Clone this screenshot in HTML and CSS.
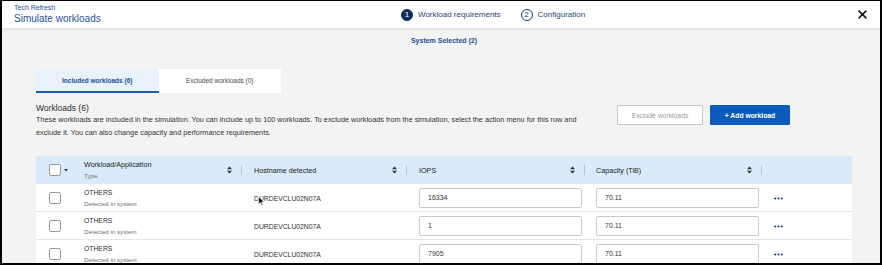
FILE: index.html
```html
<!DOCTYPE html>
<html lang="en">
<head>
    <meta charset="UTF-8">
    <meta name="viewport" content="width=device-width, initial-scale=1.0">
    <title>Simulate workloads</title>
    <link rel="stylesheet" href="styles.css">
</head>
<body>
    <div class="frame">
        <header class="topbar">
            <div class="title-block">
                <div class="crumb">Tech Refresh</div>
                <div class="title">Simulate workloads</div>
            </div>
            <ol class="steps">
                <li class="step active"><span class="step-num">1</span>Workload requirements</li>
                <li class="step"><span class="step-num">2</span>Configuration</li>
            </ol>
            <button class="close-button" aria-label="Close">
                <svg width="9" height="9" viewBox="0 0 9 9"><path d="M0.6 0.6 L8.4 8.4 M8.4 0.6 L0.6 8.4" stroke="#111" stroke-width="1.5" fill="none"/></svg>
            </button>
        </header>

        <main class="content">
            <div class="selected">System Selected (2)</div>

            <div class="tabs">
                <div class="tab active">Included workloads (6)</div>
                <div class="tab">Excluded workloads (0)</div>
            </div>

            <div class="section-head">
                <div class="section-text">
                    <h2>Workloads (6)</h2>
                    <p>These workloads are included in the simulation. You can include up to 100 workloads. To exclude workloads from the simulation, select the action menu for this row and<br>exclude it. You can also change capacity and performance requirements.</p>
                </div>
                <div class="actions">
                    <button class="btn btn-ghost">Exclude workloads</button>
                    <button class="btn btn-primary">+ Add workload</button>
                </div>
            </div>

            <div class="table">
                <div class="trow thead">
                    <div class="cell select-cell">
                        <span class="checkbox"></span>
                        <svg class="caret" width="4" height="3" viewBox="0 0 4 3"><path d="M0 0 L4 0 L2 2.6 Z" fill="#333"/></svg>
                    </div>
                    <div class="cell head-cell">
                        <div class="stack"><span>Workload/Application</span><span class="sub">Type</span></div>
                        <div class="head-tools">
                            <svg class="sort" width="5" height="8" viewBox="0 0 5 8"><path d="M0 3.3 L2.5 0.5 L5 3.3 Z M0 4.7 L5 4.7 L2.5 7.5 Z" fill="#333"/></svg>
                            <span class="divider"></span>
                        </div>
                    </div>
                    <div class="cell head-cell">
                        <span>Hostname detected</span>
                        <div class="head-tools">
                            <svg class="sort" width="5" height="8" viewBox="0 0 5 8"><path d="M0 3.3 L2.5 0.5 L5 3.3 Z M0 4.7 L5 4.7 L2.5 7.5 Z" fill="#333"/></svg>
                            <span class="divider"></span>
                        </div>
                    </div>
                    <div class="cell head-cell">
                        <span>IOPS</span>
                        <div class="head-tools">
                            <svg class="sort" width="5" height="8" viewBox="0 0 5 8"><path d="M0 3.3 L2.5 0.5 L5 3.3 Z M0 4.7 L5 4.7 L2.5 7.5 Z" fill="#333"/></svg>
                            <span class="divider"></span>
                        </div>
                    </div>
                    <div class="cell head-cell cap">
                        <span>Capacity (TiB)</span>
                        <div class="head-tools">
                            <svg class="sort" width="5" height="8" viewBox="0 0 5 8"><path d="M0 3.3 L2.5 0.5 L5 3.3 Z M0 4.7 L5 4.7 L2.5 7.5 Z" fill="#333"/></svg>
                            <span class="divider"></span>
                        </div>
                    </div>
                    <div class="cell"></div>
                </div>

                <div class="trow">
                    <div class="cell select-cell"><span class="checkbox"></span></div>
                    <div class="cell"><div class="stack"><span>OTHERS</span><span class="sub">Detected in system</span></div></div>
                    <div class="cell host">DURDEVCLU02N07A
                        <svg class="cursor" width="7" height="10" viewBox="0 0 7 10"><path d="M0.5 0.5 L0.5 8.5 L2.4 6.6 L3.8 9.5 L5 9 L3.6 6.1 L6.2 6.1 Z" fill="#111" stroke="#fff" stroke-width="0.7"/></svg>
                    </div>
                    <div class="cell"><input class="field" type="text" value="16334"></div>
                    <div class="cell cap"><input class="field" type="text" value="70.11"></div>
                    <div class="cell"><svg class="more" width="9" height="3" viewBox="0 0 9 3"><circle cx="1.2" cy="1.5" r="1.1" fill="#1b3d78"/><circle cx="4.5" cy="1.5" r="1.1" fill="#1b3d78"/><circle cx="7.8" cy="1.5" r="1.1" fill="#1b3d78"/></svg></div>
                </div>

                <div class="trow">
                    <div class="cell select-cell"><span class="checkbox"></span></div>
                    <div class="cell"><div class="stack"><span>OTHERS</span><span class="sub">Detected in system</span></div></div>
                    <div class="cell host">DURDEVCLU02N07A</div>
                    <div class="cell"><input class="field" type="text" value="1"></div>
                    <div class="cell cap"><input class="field" type="text" value="70.11"></div>
                    <div class="cell"><svg class="more" width="9" height="3" viewBox="0 0 9 3"><circle cx="1.2" cy="1.5" r="1.1" fill="#1b3d78"/><circle cx="4.5" cy="1.5" r="1.1" fill="#1b3d78"/><circle cx="7.8" cy="1.5" r="1.1" fill="#1b3d78"/></svg></div>
                </div>

                <div class="trow">
                    <div class="cell select-cell"><span class="checkbox"></span></div>
                    <div class="cell"><div class="stack"><span>OTHERS</span><span class="sub">Detected in system</span></div></div>
                    <div class="cell host">DURDEVCLU02N07A</div>
                    <div class="cell"><input class="field" type="text" value="7905"></div>
                    <div class="cell cap"><input class="field" type="text" value="70.11"></div>
                    <div class="cell"><svg class="more" width="9" height="3" viewBox="0 0 9 3"><circle cx="1.2" cy="1.5" r="1.1" fill="#1b3d78"/><circle cx="4.5" cy="1.5" r="1.1" fill="#1b3d78"/><circle cx="7.8" cy="1.5" r="1.1" fill="#1b3d78"/></svg></div>
                </div>
            </div>
        </main>
    </div>
</body>
</html>
```

FILE: styles.css
```css
html, body {
    margin: 0;
    padding: 0;
}
body {
    font-family: "Liberation Sans", Arial, sans-serif;
    background-color: #000;
}
.frame {
    width: 882px;
    height: 265px;
    box-sizing: border-box;
    border: 2px solid #000;
    border-top-width: 1px;
    background-color: #f3f3f3;
    overflow: hidden;
}

/* barra superior */
.topbar {
    display: flex;
    align-items: center;
    height: 27px;
    padding: 0 13px 0 12px;
    background-color: #fff;
    box-shadow: 0 1px 3px rgba(0, 0, 0, 0.12);
    position: relative;
}
.title-block {
    width: 387px;
    align-self: flex-start;
    padding-top: 2px;
    color: #1f5299;
}
.crumb {
    font-size: 7px;
    line-height: 9px;
}
.title {
    font-size: 10px;
    line-height: 12px;
    margin-top: 1px;
}
.steps {
    display: flex;
    gap: 20px;
    margin: 0;
    padding: 0;
    list-style: none;
}
.step {
    display: flex;
    align-items: center;
    gap: 5px;
    font-size: 8px;
    color: #24467c;
}
.step-num {
    width: 12px;
    height: 12px;
    box-sizing: border-box;
    border: 1px solid #1c3a6b;
    border-radius: 50%;
    display: flex;
    align-items: center;
    justify-content: center;
    font-size: 8px;
    color: #1c3a6b;
}
.step.active .step-num {
    background-color: #0f2d5c;
    border-color: #0f2d5c;
    color: #fff;
}
.close-button {
    margin-left: auto;
    background: none;
    border: none;
    padding: 0;
    display: flex;
    cursor: pointer;
}

/* contenido */
.content {
    padding: 0 28px 0 34px;
}
.selected {
    margin-top: 8px;
    text-align: center;
    font-size: 7px;
    line-height: 10px;
    font-weight: bold;
    color: #1b4f94;
}
.tabs {
    display: flex;
    margin-top: 23px;
}
.tab {
    width: 122.5px;
    height: 24px;
    box-sizing: border-box;
    border-bottom: 2px solid #fff;
    background-color: #fff;
    display: flex;
    align-items: center;
    justify-content: center;
    font-size: 6.5px;
    color: #4a4a4a;
}
.tab.active {
    background-color: #e9f2fc;
    border-bottom-color: #1a5bb5;
    color: #1d4f95;
    font-weight: bold;
}
.section-head {
    display: flex;
    align-items: flex-start;
    padding-right: 62px;
}
.section-text {
    flex: 1;
}
.section-text h2 {
    margin: 10px 0 0;
    font-size: 8.5px;
    line-height: 10px;
    font-weight: normal;
    color: #2b2b2b;
}
.section-text p {
    margin: 0;
    font-size: 7.3px;
    line-height: 13px;
    color: #333;
}
.actions {
    display: flex;
    gap: 7px;
    margin-top: 12px;
}
.btn {
    height: 20px;
    box-sizing: border-box;
    border-radius: 1px;
    font-family: inherit;
    font-size: 6.8px;
    padding: 0;
    cursor: pointer;
}
.btn-ghost {
    width: 86px;
    background-color: #fff;
    border: 1px solid #c4c4c4;
    color: #9a9a9a;
}
.btn-primary {
    width: 80px;
    background-color: #0b5cba;
    border: 1px solid #0b5cba;
    color: #fff;
    font-weight: bold;
}

/* tabla */
.table {
    margin-top: 17px;
}
.trow {
    display: grid;
    grid-template-columns: 36px 170px 165px 178px 177px 1fr;
    height: 28px;
    background-color: #fff;
    border-bottom: 1px solid #e4e4e4;
    box-sizing: border-box;
}
.trow.thead {
    background-color: #d9ebfa;
    border-bottom: none;
}
.cell {
    display: flex;
    align-items: center;
    padding-left: 12px;
    font-size: 7px;
    color: #2e2e2e;
    min-width: 0;
    position: relative;
}
.cell.cap {
    padding-left: 11px;
}
.select-cell {
    padding-left: 13px;
    gap: 3px;
}
.checkbox {
    width: 12px;
    height: 12px;
    box-sizing: border-box;
    border: 1px solid #9a9a9a;
    border-radius: 2px;
    background-color: #fff;
    flex-shrink: 0;
}
.head-cell {
    justify-content: space-between;
    font-size: 7.2px;
    color: #222;
}
.head-tools {
    display: flex;
    align-items: center;
    gap: 9px;
}
.divider {
    width: 1px;
    height: 10px;
    background-color: #b9c4cf;
}
.stack {
    display: flex;
    flex-direction: column;
    line-height: 11.5px;
}
.stack .sub {
    font-size: 6.2px;
    color: #6f6f6f;
}
.trow:not(.thead) .stack {
    line-height: 11px;
}
.trow:not(.thead) .stack span:first-child {
    font-size: 6.8px;
}
.host {
    font-size: 6.8px;
    padding-top: 2px;
}
.field {
    width: 162.7px;
    height: 20px;
    box-sizing: border-box;
    border: 1px solid #c9c9c9;
    border-radius: 2px;
    padding: 0 0 0 8px;
    font-family: inherit;
    font-size: 7px;
    color: #333;
    background-color: #fff;
    outline: none;
}
.more {
    margin-top: 2px;
}
.cursor {
    position: absolute;
    left: 16px;
    top: 12px;
}
```
